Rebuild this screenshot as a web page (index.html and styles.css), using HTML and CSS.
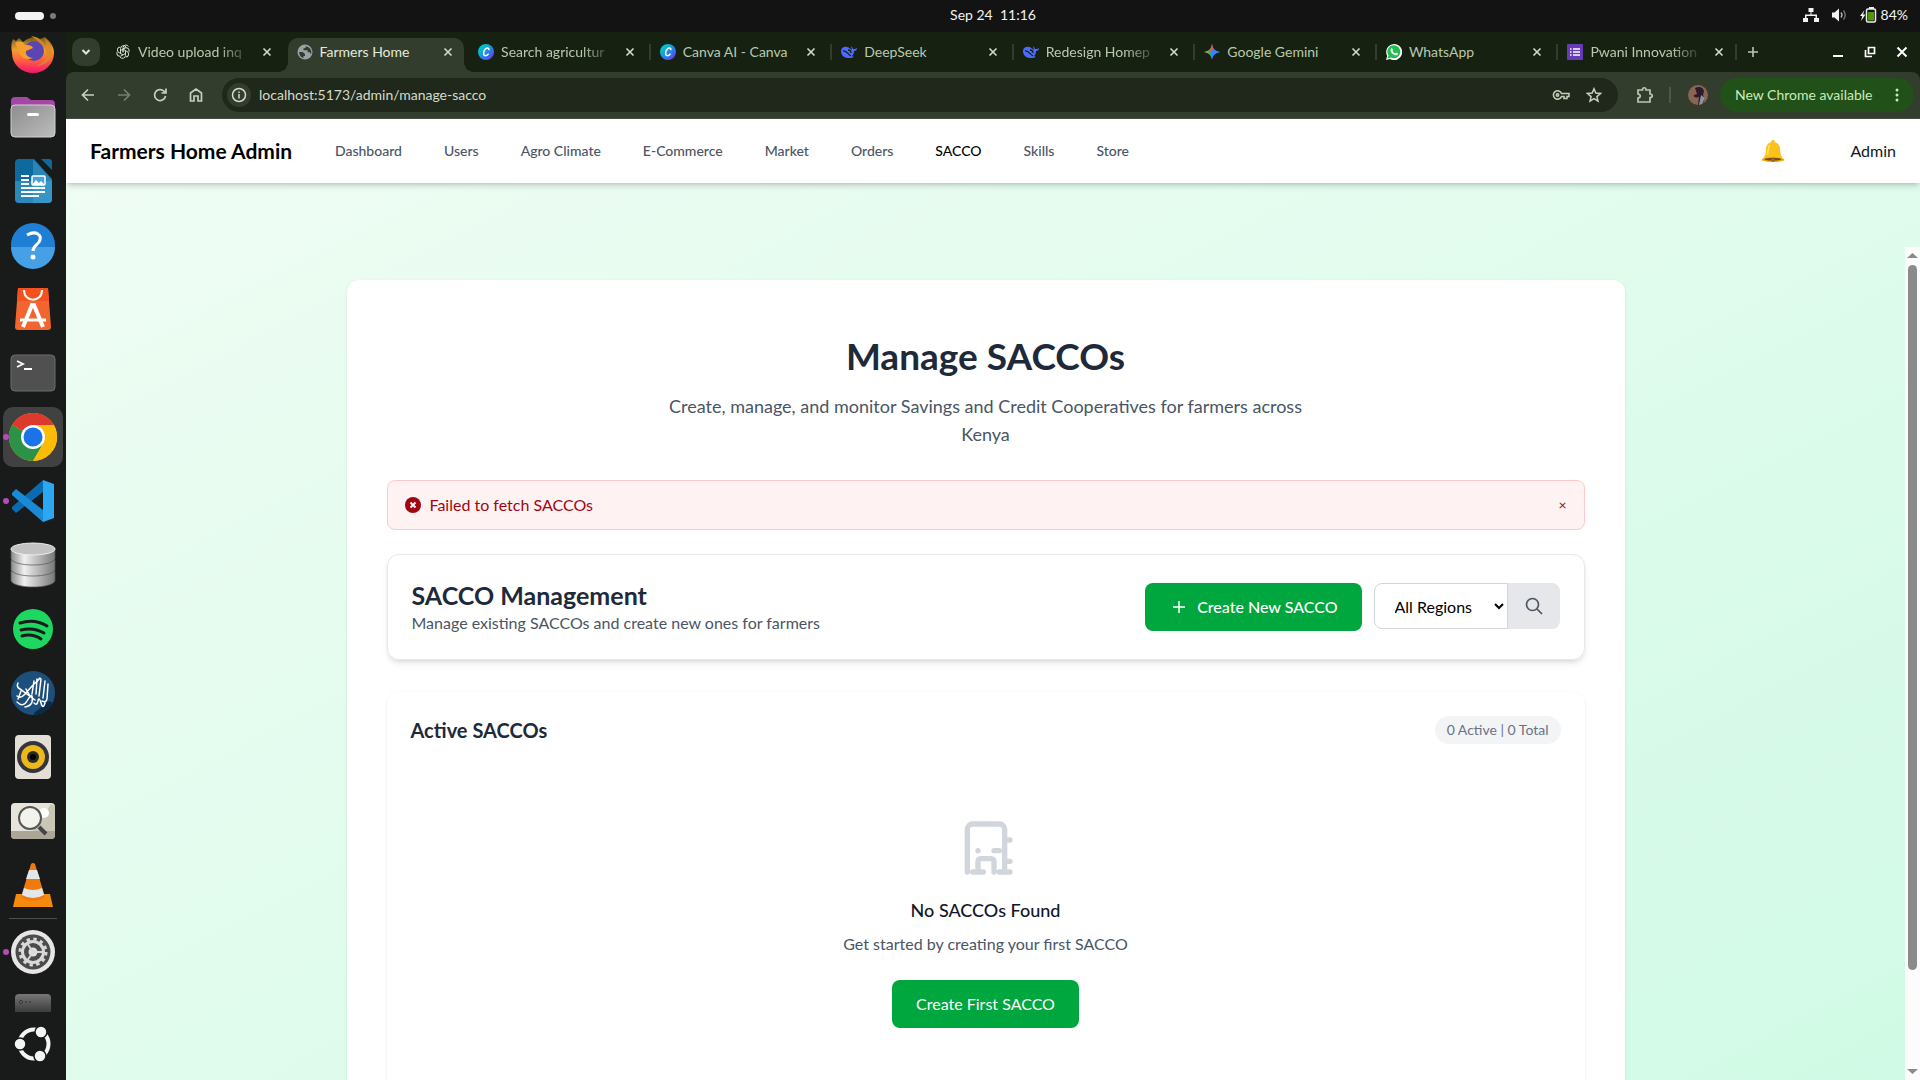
FILE: index.html
```html
<!DOCTYPE html>
<html lang="en">
<head>
<meta charset="utf-8">
<title>Farmers Home</title>
<link rel="stylesheet" href="styles.css">
</head>
<body>
<div class="desktop">
  <div class="topbar">
    <div class="workspaces"><span class="ws-pill"></span><span class="ws-dot"></span></div>
    <div class="topbar-main">
      <time class="clock">Sep 24&nbsp; 11:16</time>
      <div class="tray">
        <svg width="16" height="16" viewBox="0 0 16 16" fill="#f2f2f2"><path d="M5.500 1h5v4h-2v2.500h5.500v3.500h2v4h-5v-4h1.500v-2h-9v2H5v4H0v-4h2V7.500h5.500V5h-2z"/></svg>
        <svg width="16" height="16" viewBox="0 0 16 16"><path d="M1 5.500h2.500L8 1.500v13L3.500 10.500H1z" fill="#f2f2f2"/><path d="M10 5.500q2 2.500 0 5" fill="none" stroke="#bbb" stroke-width="1.300"/><path d="M12.500 3.500q3.500 4.500 0 9" fill="none" stroke="#777" stroke-width="1.300"/></svg>
        <svg width="18" height="16" viewBox="0 0 18 16"><path d="M5.500 3L1 9h2.300L2 14l4.500-6.500H4z" fill="#f2f2f2"/><path d="M10 1h5" stroke="#eee" stroke-width="2"/><rect x="7.500" y="2" width="9" height="13" rx="1.500" fill="#131313" stroke="#eee" stroke-width="1.500"/><rect x="9" y="5" width="6" height="8.500" fill="#4e9a06"/></svg>
        <span>84%</span>
      </div>
    </div>
  </div>
  <div class="workspace">
    <nav class="dock" aria-label="Dock">
      <span class="app app-cut"><svg width="48" height="42" viewBox="0 6 48 42"><defs><linearGradient id="ff" x1="0" y1="0" x2="0" y2="1"><stop offset="0" stop-color="#6b5a18"/><stop offset=".35" stop-color="#f0a030"/><stop offset=".6" stop-color="#ff6a3a"/><stop offset="1" stop-color="#f5136f"/></linearGradient></defs><path d="M5 11l3 2 3-3 4 4c5-4 9-5 13-5l4 2 5-2c6 5 9 10 9 16a21 20 0 0 1-42 0C3 19 3 15 5 11z" transform="translate(-1 0)" fill="url(#ff)"/><circle cx="25" cy="23" r="10" fill="#5b45b0"/><path d="M6 15c5-3 9-1 10 2 3 0 7 0 8 3l-7 3c-1 4 3 7 7 7-7 3-13-1-14-7z" fill="#f5a02e"/><path d="M22 8c8 1 14 6 15 13 1-4 0-8-2-11 6 4 9 10 8 16-2 8-9 12-16 12 8-3 12-9 10-15-1-6-9-10-15-15z" fill="#dc8a28" opacity=".8"/></svg></span>
      <span class="app"><svg width="48" height="48" viewBox="0 0 48 48"><defs><linearGradient id="fl" x1="0" y1="0" x2="1" y2="1"><stop offset="0" stop-color="#8c8c8c"/><stop offset="1" stop-color="#bdbdbd"/></linearGradient></defs><path d="M2 8a4 4 0 0 1 4-4h12l4 3h20a4 4 0 0 1 4 4v9H2z" fill="#a349a4"/><rect x="2" y="12" width="44" height="32" rx="4" fill="url(#fl)" stroke="#d0d0d0"/><rect x="18" y="20" width="12" height="3" rx="1.500" fill="#fff"/></svg></span>
      <span class="app"><svg width="48" height="48" viewBox="0 0 48 48"><path d="M10 2h15l18 20v20a4 4 0 0 1-4 4H10a4 4 0 0 1-4-4V6a4 4 0 0 1 4-4z" fill="#0e6a9e"/><path d="M24 2l19 21v19a4 4 0 0 1-4 4H24z" fill="#2a84b8"/><path d="M6 24h37v18a4 4 0 0 1-4 4H10a4 4 0 0 1-4-4z" fill="#45a5d8" opacity=".5"/><path d="M32 2h8a3 3 0 0 1 3 3v8z" fill="#0e6a9e"/><path d="M12 19h8M12 23h8M12 27h8M12 31h24M12 35h24M12 39h18" stroke="#fff" stroke-width="2"/><rect x="23" y="19" width="13" height="9" rx="1" fill="#45a5d8" stroke="#fff" stroke-width="1.500"/><path d="M23 28l4-5 3 3 2-2 4 4z" fill="#fff"/></svg></span>
      <span class="app"><svg width="48" height="48" viewBox="0 0 48 48"><circle cx="24" cy="24" r="22" fill="#1f7fd4"/><path d="M2 26h44a22 22 0 0 1-44 0z" fill="#45a0e6"/><path d="M18 14c9-5 16 0 12 7-2 3-6 4-6 9" fill="none" stroke="#fff" stroke-width="3"/><circle cx="24" cy="36" r="2.500" fill="#fff"/></svg></span>
      <span class="app"><svg width="48" height="48" viewBox="0 0 48 48"><path d="M9 3h30l3 39a3 3 0 0 1-3 3H9a3 3 0 0 1-3-3z" fill="#f26430"/><path d="M9 3h30l1 13H8z" fill="#f4511e"/><path d="M15 5c0 13 18 13 18 0" fill="none" stroke="#fff" stroke-width="2"/><path d="M14 42l9-22h2l9 22" fill="none" stroke="#fff" stroke-width="4"/><path d="M11 35h26" stroke="#fff" stroke-width="3"/></svg></span>
      <span class="app"><svg width="48" height="48" viewBox="0 0 48 48"><rect x="2" y="6" width="44" height="36" rx="4" fill="#505050" stroke="#6d6d6d"/><path d="M8 12l6 3-6 3M15 20h8" fill="none" stroke="#fff" stroke-width="1.800"/></svg></span>
      <span class="app app-active"><span class="run-dot"></span><svg width="48" height="48" viewBox="0 0 48 48"><circle cx="24" cy="24" r="24" fill="#fbbc05"/><path d="M24 24L3.200 12A24 24 0 0 1 44.800 12H24z" fill="#db3a2c"/><path d="M3.200 12A24 24 0 0 0 24 48L34.400 30 24 24z" fill="#2c9247"/><path d="M24 48L34.500 30 36 16l9-4A24 24 0 0 1 24 48z" fill="#fbbc05"/><circle cx="24" cy="24" r="12" fill="#fff"/><circle cx="24" cy="24" r="9.500" fill="#1a73e8"/></svg></span>
      <span class="app"><span class="run-dot"></span><svg width="48" height="48" viewBox="0 0 48 48"><path d="M34 3v12L7 36l-4-4v-2z" fill="#0a6bb0"/><path d="M7 12l27 21v12L3 18v-2z" fill="#1a8ad4"/><path d="M34 3l11 4v34l-11 4z" fill="#2aa8f2"/></svg></span>
      <span class="app"><svg width="48" height="48" viewBox="0 0 48 48"><defs><linearGradient id="db"><stop offset="0" stop-color="#8a8a8a"/><stop offset=".3" stop-color="#f0f0f0"/><stop offset="1" stop-color="#777"/></linearGradient></defs><g fill="url(#db)" stroke="#555" stroke-width=".7"><path d="M2 30v10c4 8 40 8 44 0V30z"/><path d="M2 19v10c4 8 40 8 44 0V19z"/><path d="M2 8v10c4 8 40 8 44 0V8z"/></g><ellipse cx="24" cy="8" rx="22" ry="6" fill="#c2c2c2" stroke="#eee"/></svg></span>
      <span class="app"><svg width="48" height="48" viewBox="0 0 48 48"><circle cx="24" cy="24" r="20" fill="#1ed760"/><path d="M11 18c9-3 19-2 27 3M12 25c8-2 16-1 23 3M13 31c7-2 13-1 19 3" fill="none" stroke="#191a1a" stroke-width="3" stroke-linecap="round"/></svg></span>
      <span class="app"><svg width="48" height="48" viewBox="0 0 48 48"><circle cx="24" cy="24" r="22" fill="#1d4f7c"/><path d="M25 44l15-12 4 2a22 22 0 0 1-19 12z" fill="#0c2a48"/><path d="M9 14q-2 4 2 6l15 11M8 27q4 3 8-2l8-9q4-3 7-7M8 33q6 6 10-1t5-5 0 6-7 5M25 12l-2 13M28 10l-1 15M32 10l-2 17M36 12l-2 17M39 15l-1 15q-1 4-5 2M25 34q3 3 4-2t3 2 4 0M12 22l-3 8M17 20l4 7" fill="none" stroke="#fff" stroke-width="1.500" stroke-linecap="round"/></svg></span>
      <span class="app"><svg width="48" height="48" viewBox="0 0 48 48"><rect x="6" y="2" width="36" height="44" rx="4" fill="#e4dfd6"/><circle cx="24" cy="24" r="16" fill="#34343c"/><circle cx="24" cy="24" r="12" fill="#edb91a"/><circle cx="24" cy="24" r="6" fill="#2a2a2a"/><circle cx="24" cy="24" r="3" fill="#000"/></svg></span>
      <span class="app"><svg width="48" height="48" viewBox="0 0 48 48"><rect x="2" y="6" width="44" height="36" rx="4" fill="#e6e4da"/><path d="M2 34h44v4a4 4 0 0 1-4 4H6a4 4 0 0 1-4-4z" fill="#aca698"/><path d="M24 34L42 7l4 2v25z" fill="#c9c6b6"/><circle cx="35" cy="16" r="5" fill="#fff"/><circle cx="21" cy="21" r="11" fill="#f6f6f2" fill-opacity=".8" stroke="#555" stroke-width="2"/><path d="M30 30l7 7" stroke="#444" stroke-width="4"/></svg></span>
      <span class="app"><svg width="48" height="48" viewBox="0 0 48 48"><path d="M7 33h34l3 13H4z" fill="#f58a0c"/><path d="M22 3q2-2 4 0l10 33q-12 8-24 0z" fill="#f07a10"/><path d="M20 9h8l3 9H17zM15 27q9 4 18 0l2 7q-11 6-22 0z" fill="#e3e7ea"/></svg></span>
      <span class="dock-line"></span>
      <span class="app"><span class="run-dot"></span><svg width="48" height="48" viewBox="0 0 48 48"><circle cx="24" cy="24" r="22" fill="#e6e6e6"/><circle cx="24" cy="24" r="17.500" fill="#4b4b4b"/><circle cx="24" cy="24" r="13" fill="none" stroke="#d8d8d8" stroke-width="3" stroke-dasharray="3.400 3.400"/><circle cx="24" cy="24" r="10.500" fill="none" stroke="#d8d8d8" stroke-width="3"/><circle cx="24" cy="24" r="4.500" fill="#e0e0e0"/><path d="M24 24h10M24 24l-6 9M24 24l-6-9" stroke="#d8d8d8" stroke-width="2"/></svg></span>
      <span class="app-half"><svg width="36" height="18" viewBox="0 0 36 18"><defs><linearGradient id="dk" x1="0" y1="0" x2="0" y2="1"><stop offset="0" stop-color="#777"/><stop offset="1" stop-color="#3c3c3c"/></linearGradient></defs><path d="M0 18V4a4 4 0 0 1 4-4h28a4 4 0 0 1 4 4v14z" fill="url(#dk)"/><circle cx="6" cy="8" r="1.500" fill="#6a7a2a" stroke="#333"/><circle cx="11" cy="8" r="1" fill="#3c3c3c"/><circle cx="15" cy="8" r="1" fill="#3c3c3c"/></svg></span>
      <span class="app"><svg width="48" height="48" viewBox="0 0 48 48"><circle cx="25" cy="24" r="14.500" fill="none" stroke="#f4f4f4" stroke-width="4"/><g fill="#f4f4f4" stroke="#191a1a" stroke-width="1.500"><circle cx="11" cy="24" r="6"/><circle cx="32" cy="12" r="6"/><circle cx="31" cy="36" r="6"/></g></svg></span>
    </nav>

    <div class="browser">
      <div class="tabstrip">
        <button class="tab-search" aria-label="Search tabs"><svg width="12" height="12" viewBox="0 0 12 12"><path d="M2.500 4L6 7.500 9.500 4" fill="none" stroke="#e0e6da" stroke-width="2"/></svg></button>
        <div class="tabs">
          <div class="tab"><svg class="fav" viewBox="0 0 16 16"><g fill="none" stroke="#d5ddd0" stroke-width="1"><path id="petal" d="M8 8V3.500a3 3 0 0 1 5.500-1"/><path d="M5.500 9.500V4.500a3 3 0 0 1 5.500-1.500l-3 2v3.500"/><path d="M5.500 9.500V4.500a3 3 0 0 1 5.500-1.500" transform="rotate(60 8 8)"/><path d="M5.500 9.500V4.500a3 3 0 0 1 5.500-1.500" transform="rotate(120 8 8)"/><path d="M5.500 9.500V4.500a3 3 0 0 1 5.500-1.500" transform="rotate(180 8 8)"/><path d="M5.500 9.500V4.500a3 3 0 0 1 5.500-1.500" transform="rotate(240 8 8)"/><path d="M5.500 9.500V4.500a3 3 0 0 1 5.500-1.500" transform="rotate(300 8 8)"/></g></svg><span class="tab-title fade">Video upload inq</span><button class="tab-x" aria-label="Close tab"><svg width="10" height="10"><path d="M1.500 1.500l7 7m0-7l-7 7"/></svg></button></div>
          <div class="tab tab-on"><svg class="fav" viewBox="0 0 16 16"><circle cx="8" cy="8" r="7.500" fill="#9aa0a6"/><path d="M2.200 8h3.500l2.300 2v2H6.500v2A6.200 6.200 0 0 1 2.200 8zM9 2.200c0 1.500-1 2-2.500 2v2h4.200v2h2l1.300 2a6.200 6.200 0 0 0-5-8z" fill="#333d2d"/></svg><span class="tab-title">Farmers Home</span><button class="tab-x" aria-label="Close tab"><svg width="10" height="10"><path d="M1.500 1.500l7 7m0-7l-7 7"/></svg></button></div>
          <div class="tab"><svg class="fav" viewBox="0 0 16 16"><defs><linearGradient id="cv" x1="0" y1="0" x2="1" y2="1"><stop offset=".2" stop-color="#00c4cc"/><stop offset=".6" stop-color="#2a7de8"/><stop offset="1" stop-color="#7d2ae8"/></linearGradient></defs><circle cx="8" cy="8" r="8" fill="url(#cv)"/><path d="M10.800 6.200c.5-2-1.300-2.700-3-1.500-2.600 1.900-3 6.800-.5 7 1.500.1 2.500-.7 3.300-2" fill="none" stroke="#fff" stroke-width="1.500"/></svg><span class="tab-title fade">Search agricultur</span><button class="tab-x" aria-label="Close tab"><svg width="10" height="10"><path d="M1.500 1.500l7 7m0-7l-7 7"/></svg></button></div>
          <div class="tab tab-sep"><svg class="fav" viewBox="0 0 16 16"><circle cx="8" cy="8" r="8" fill="url(#cv)"/><path d="M10.800 6.200c.5-2-1.300-2.700-3-1.500-2.600 1.900-3 6.800-.5 7 1.500.1 2.500-.7 3.300-2" fill="none" stroke="#fff" stroke-width="1.500"/></svg><span class="tab-title">Canva AI - Canva</span><button class="tab-x" aria-label="Close tab"><svg width="10" height="10"><path d="M1.500 1.500l7 7m0-7l-7 7"/></svg></button></div>
          <div class="tab tab-sep"><svg class="fav" viewBox="0 0 16 16"><path d="M0 7c0-3 3-5 6-4 2 0 3 2 5 3l-1-4c1 1 2 2 2 3 1 0 3 0 4-1 0 2-1 3-3 3 0 3-1 4-2 5l2 1c-2 1-4 1-6 1-4 0-7-3-7-7z" fill="#4d6bfe"/><path d="M2 7c3-1 5 3 8 5M7 6c2 0 3 1 3 3" fill="none" stroke="#162112" stroke-width="1.300"/></svg><span class="tab-title">DeepSeek</span><button class="tab-x" aria-label="Close tab"><svg width="10" height="10"><path d="M1.500 1.500l7 7m0-7l-7 7"/></svg></button></div>
          <div class="tab tab-sep"><svg class="fav" viewBox="0 0 16 16"><path d="M0 7c0-3 3-5 6-4 2 0 3 2 5 3l-1-4c1 1 2 2 2 3 1 0 3 0 4-1 0 2-1 3-3 3 0 3-1 4-2 5l2 1c-2 1-4 1-6 1-4 0-7-3-7-7z" fill="#4d6bfe"/><path d="M2 7c3-1 5 3 8 5M7 6c2 0 3 1 3 3" fill="none" stroke="#162112" stroke-width="1.300"/></svg><span class="tab-title fade">Redesign Homep</span><button class="tab-x" aria-label="Close tab"><svg width="10" height="10"><path d="M1.500 1.500l7 7m0-7l-7 7"/></svg></button></div>
          <div class="tab tab-sep"><svg class="fav" viewBox="0 0 16 16"><defs><linearGradient id="gm" x1="0" y1="0" x2="1" y2="0"><stop offset="0" stop-color="#f9bc15"/><stop offset=".35" stop-color="#45a86b"/><stop offset=".55" stop-color="#3186ff"/></linearGradient></defs><path d="M8 0c1 5 3 7 8 8-5 1-7 3-8 8-1-5-3-7-8-8 5-1 7-3 8-8z" fill="url(#gm)"/><path d="M8 0c1 5 2 6 4 7H5c2-2 2-4 3-7z" fill="#ee5145"/><path d="M16 8c-5 1-7 3-8 5V6h3c1 1 3 2 5 2z" fill="#3186ff"/></svg><span class="tab-title">Google Gemini</span><button class="tab-x" aria-label="Close tab"><svg width="10" height="10"><path d="M1.500 1.500l7 7m0-7l-7 7"/></svg></button></div>
          <div class="tab tab-sep"><svg class="fav" viewBox="0 0 16 16"><path d="M0 16l1.200-4A8 8 0 1 1 4 14.900z" fill="#fff"/><path d="M1.500 14.500l1-3A6.500 6.500 0 1 1 5 13.600z" fill="#1fc04f"/><path d="M5 4.500c1-.8 1.500 0 2 1.500L6.500 7c.5 1 1.500 2 2.500 2.300l1-.8 2 1c0 1.500-1.500 2-2.500 1.800C7 10.800 4.500 8.500 4.500 6z" fill="#fff"/></svg><span class="tab-title">WhatsApp</span><button class="tab-x" aria-label="Close tab"><svg width="10" height="10"><path d="M1.500 1.500l7 7m0-7l-7 7"/></svg></button></div>
          <div class="tab tab-sep"><svg class="fav" viewBox="0 0 16 16"><rect width="16" height="16" rx="1" fill="#673ab7"/><path d="M3 5h1.500M3 8h1.500M3 11h1.500M6 5h7M6 8h7M6 11h7" stroke="#fff" stroke-width="1.700"/></svg><span class="tab-title fade">Pwani Innovation</span><button class="tab-x" aria-label="Close tab"><svg width="10" height="10"><path d="M1.500 1.500l7 7m0-7l-7 7"/></svg></button></div>
        </div>
        <div class="strip-end">
          <button class="new-tab" aria-label="New tab"><svg width="12" height="12" viewBox="0 0 12 12"><path d="M6 1v10M1 6h10" stroke="#b9c9ae" stroke-width="1.600"/></svg></button>
          <div class="win-buttons">
            <button aria-label="Minimise"><svg width="12" height="12"><path d="M1 10h10" stroke="#fff" stroke-width="2"/></svg></button>
            <button aria-label="Restore"><svg width="12" height="12" fill="none" stroke="#fff" stroke-width="1.700"><path d="M4.500 1.500h6v6h-6z"/><path d="M1.500 4v6.500H8"/></svg></button>
            <button aria-label="Close"><svg width="12" height="12"><path d="M1.500 1.500l9 9m0-9l-9 9" stroke="#fff" stroke-width="2"/></svg></button>
          </div>
        </div>
      </div>
      <div class="toolbar">
        <div class="nav-buttons">
          <button aria-label="Back"><svg class="ico" viewBox="0 0 16 16"><path d="M14 8H3M8 2.500L2.500 8 8 13.500"/></svg></button>
          <button class="dim" aria-label="Forward"><svg class="ico" viewBox="0 0 16 16"><path d="M2 8h11M8 2.500L13.500 8 8 13.500"/></svg></button>
          <button aria-label="Reload"><svg class="ico" viewBox="0 0 16 16"><path d="M13.500 9A5.500 5.500 0 1 1 12 4.200L13.500 6M14 1.500V6H9.500"/></svg></button>
          <button aria-label="Home"><svg class="ico" viewBox="0 0 16 16"><path d="M2.500 14V6L8 2l5.500 4v8H10V9H6v5z"/></svg></button>
        </div>
        <div class="omnibox">
          <span class="site-info"><svg width="16" height="16" viewBox="0 0 16 16" fill="none" stroke="#d3dccb" stroke-width="1.500"><circle cx="8" cy="8" r="6.500"/><path d="M8 7v4.500M8 4.500V6"/></svg></span>
          <input class="url" type="text" aria-label="Address" value="localhost:5173/admin/manage-sacco">
          <svg width="18" height="16" viewBox="0 0 18 16" fill="none" stroke="#c5d0bc" stroke-width="1.500"><path d="M9.500 6.500A4.200 4.200 0 1 0 9.500 9.500H12v2h3v-2h2v-3z"/><circle cx="5.500" cy="8" r="1.200"/></svg>
          <svg width="16" height="16" viewBox="0 0 16 16" fill="none" stroke="#c5d0bc" stroke-width="1.500"><path d="M8 1.800l1.800 4.300 4.700.4-3.600 3.100 1.100 4.600L8 11.700l-4 2.500 1.100-4.600L1.500 6.500l4.700-.4z"/></svg>
        </div>
        <div class="tool-end">
          <svg width="18" height="18" viewBox="0 0 18 18" fill="none" stroke="#b9c9ae" stroke-width="1.700"><path d="M2 4h4.500c0-3 3.500-3 3.500 0h4v4c3 0 3 3.500 0 3.500V16H2v-4c3-.5 3-3.500 0-4z"/></svg>
          <span class="tool-line"></span>
          <svg class="avatar" width="20" height="20" viewBox="0 0 20 20"><circle cx="10" cy="10" r="10" fill="#8a6552"/><path d="M7 3c4-2 8-1 9 3l-1 4c2 3 2 6-1 9l-4 1 1-8c-3 1-6 0-5-2l3-1z" fill="#2a1c2c"/><path d="M13 10l4 3-3 6-3 1z" fill="#8d929e"/></svg>
          <button class="update">New Chrome available<svg width="4" height="16" viewBox="0 0 4 16" fill="#c9edb8"><circle cx="2" cy="3" r="1.500"/><circle cx="2" cy="8" r="1.500"/><circle cx="2" cy="13" r="1.500"/></svg></button>
        </div>
      </div>

      <div class="page">
        <header class="site-header">
          <span class="brand">Farmers Home Admin</span>
          <nav class="site-nav">
            <a href="#">Dashboard</a><a href="#">Users</a><a href="#">Agro Climate</a><a href="#">E-Commerce</a><a href="#">Market</a><a href="#">Orders</a><a href="#" class="on">SACCO</a><a href="#">Skills</a><a href="#">Store</a>
          </nav>
          <button class="bell" aria-label="Notifications"><svg width="24" height="24" viewBox="0 0 24 24"><path d="M12 1c1.500 0 2 1 2 2.200 4 1 5 4 5.200 8.300.2 4 1 6 3.300 8.500h-21C3.800 17.500 4.600 15.500 4.800 11.500 5 7.200 6 4.200 10 3.200 10 2 10.500 1 12 1z" fill="#fcc21b"/><path d="M9 6C7 8 7 12 6.500 16" stroke="#ffe36c" stroke-width="1.500" fill="none"/><path d="M1 20q11-4 22 0v1.500q-11 3-22 0z" fill="#f2a600"/><ellipse cx="12" cy="20.300" rx="8.500" ry="1.500" fill="#6d4c1f"/><circle cx="12" cy="21" r="2" fill="#a06a12"/></svg></button>
          <span class="user">Admin</span>
        </header>
        <div class="scroller">
          <main class="card">
            <div class="intro">
              <h1>Manage SACCOs</h1>
              <p>Create, manage, and monitor Savings and Credit Cooperatives for farmers across Kenya</p>
            </div>
            <div class="alert" role="alert">
              <svg width="16" height="16" viewBox="0 0 16 16"><circle cx="8" cy="8" r="8" fill="#9f0712"/><path d="M5.500 5.500l5 5m0-5l-5 5" stroke="#fef2f2" stroke-width="2"/></svg>
              <span>Failed to fetch SACCOs</span>
              <button aria-label="Dismiss">×</button>
            </div>
            <section class="manage">
              <div class="manage-text">
                <h2>SACCO Management</h2>
                <p>Manage existing SACCOs and create new ones for farmers</p>
              </div>
              <div class="actions">
                <button class="btn btn-new"><svg width="12" height="12" viewBox="0 0 12 12"><path d="M6 0v12M0 6h12" stroke="#fff" stroke-width="1.500"/></svg>Create New SACCO</button>
                <div class="filter">
                  <select aria-label="Region"><option>All Regions</option></select>
                  <button class="search" aria-label="Search"><svg width="18" height="18" viewBox="0 0 18 18" fill="none" stroke="#4a5565" stroke-width="1.700"><circle cx="7.500" cy="7.500" r="6"/><path d="M12 12l5 5"/></svg></button>
                </div>
              </div>
            </section>
            <section class="active">
              <div class="active-head"><h3>Active SACCOs</h3><span class="pill">0 Active | 0 Total</span></div>
              <div class="empty">
                <svg width="64" height="64" viewBox="0 0 24 24" fill="none" stroke="#d1d5dc" stroke-width="2" stroke-linecap="round" stroke-linejoin="round"><path d="M5 21V5a2 2 0 0 1 2-2h10a2 2 0 0 1 2 2v16m0 0h2m-2 0h-2M19 9h2m-2 8h2M7 21h4M9 21v-4a1 1 0 0 1 1-1h4a1 1 0 0 1 1 1v4M9 13h.01M15 13h2"/></svg>
                <h4>No SACCOs Found</h4>
                <p>Get started by creating your first SACCO</p>
                <button class="btn">Create First SACCO</button>
              </div>
            </section>
          </main>
        </div>
        <div class="scrollbar">
          <svg width="15" height="18" viewBox="0 0 15 18"><path d="M2 11l5.500-5 5.500 5z" fill="#8b8b8b"/></svg>
          <span class="thumb"></span>
          <span class="track"></span>
          <svg width="15" height="18" viewBox="0 0 15 18"><path d="M2 7l5.500 5L13 7z" fill="#8b8b8b"/></svg>
        </div>
      </div>
    </div>
  </div>
</div>
</body>
</html>
```
FILE: styles.css
```css
* { box-sizing: border-box; }
body, h1, h2, h3, h4, p { margin: 0; }
body { font-family: Lato, "Open Sans", sans-serif; font-size: 16px; line-height: 24px; color: #101828; }
button, select, input { font: inherit; color: inherit; margin: 0; border: 0; background: none; padding: 0; }
svg { display: block; flex: none; }

.desktop { height: 100vh; display: flex; flex-direction: column; overflow: hidden; }
.topbar { display: flex; height: 32px; flex: none; background: #131313; color: #f2f2f2; font-size: 14px; }
.workspaces { width: 66px; display: flex; align-items: center; gap: 6px; padding-left: 15px; }
.ws-pill { width: 29px; height: 8px; border-radius: 4px; background: #f2f2f2; }
.ws-dot { width: 6px; height: 6px; border-radius: 3px; background: #7c7c7c; }
.topbar-main { flex: 1; display: grid; grid-template-columns: 1fr auto 1fr; align-items: center; padding-bottom: 2px; }
.clock { grid-column: 2; }
.tray { display: flex; align-items: center; justify-content: flex-end; gap: 12px; padding-right: 12px; }
.tray span { margin-left: -8px; }

.workspace { flex: 1; display: flex; min-height: 0; }
.dock { width: 66px; flex: none; background: #191a1a; display: flex; flex-direction: column; overflow: hidden; }
.app { height: 64px; flex: none; display: flex; align-items: center; justify-content: center; position: relative; }
.app-cut { height: 53px; align-items: flex-start; padding-top: 2px; }
.app-active::before { content: ""; position: absolute; inset: 2px 3px; border-radius: 10px; background: #414141; }
.app svg { position: relative; width: 48px; }
.run-dot { position: absolute; z-index: 1; left: 3px; top: 29px; width: 6px; height: 6px; border-radius: 3px; background: #b44cb8; }
.dock-line { height: 1px; margin: 1px 9px; background: #4c4d4d; flex: none; }
.app-half { height: 28px; flex: none; display: flex; justify-content: center; align-items: flex-end; }

.browser { flex: 1; min-width: 0; display: flex; flex-direction: column; background: #162112; }
.tabstrip { display: flex; height: 40px; padding: 6px 0 0 6px; flex: none; }
.tab-search { width: 28px; height: 28px; border-radius: 10px; background: #333d2d; display: flex; align-items: center; justify-content: center; margin-right: 6px; }
.tabs { flex: 1; min-width: 0; display: grid; grid-template-columns: repeat(9, 1fr); }
.tab { position: relative; display: flex; align-items: center; min-width: 0; height: 34px; padding: 0 16px 6px 9px; font-size: 14px; color: #b9c9ae; }
.fav { width: 16px; height: 16px; margin-right: 7px; }
.tab-title { flex: 1; min-width: 0; white-space: nowrap; margin-right: 8px; line-height: 20px; }
.fade { mask-image: linear-gradient(to right, #000 70%, transparent 98%); }
.tab-x { display: flex; }
.tab-x path { stroke: #d3dccb; stroke-width: 1.600; fill: none; }
.tab-on { color: #e3ebdc; }
.tab-on > * { position: relative; }
.tab-on::before { content: ""; position: absolute; left: 0; right: 5px; top: 0; bottom: 0; background: #333d2d; border-radius: 10px 10px 0 0; }
.tab-on::after { content: ""; position: absolute; left: -10px; right: -5px; bottom: 0; height: 10px; background: radial-gradient(circle at 0 0, transparent 10px, #333d2d 10px) left / 10px 10px no-repeat, radial-gradient(circle at 100% 0, transparent 10px, #333d2d 10px) right / 10px 10px no-repeat; }
.tab-sep::before { content: ""; position: absolute; left: -2px; top: 6px; width: 2px; height: 16px; background: #333d2d; }
.tab:last-child::after { content: ""; position: absolute; right: 3px; top: 6px; width: 2px; height: 16px; background: #333d2d; }
.strip-end { width: 180px; height: 28px; display: flex; justify-content: space-between; align-items: center; padding: 0 12px 0 0; }
.new-tab { display: flex; padding: 2px 7px; }
.win-buttons { display: flex; gap: 20px; }
.win-buttons button { display: flex; }

.toolbar { display: flex; align-items: center; height: 47px; flex: none; background: #333d2d; border-bottom: 1px solid #474d42; border-radius: 8px 8px 0 0; padding: 0 6px 0 14px; }
.nav-buttons { display: flex; gap: 20px; width: 142px; }
.nav-buttons button { display: flex; }
.ico { width: 16px; height: 16px; fill: none; stroke: #c5d0bc; stroke-width: 1.700; }
.dim { opacity: .45; }
.omnibox { flex: 1; height: 34px; border-radius: 17px; background: #1f281a; display: flex; align-items: center; gap: 16px; padding: 0 16px 0 5px; }
.site-info { width: 24px; height: 24px; border-radius: 12px; background: #333d2d; display: flex; align-items: center; justify-content: center; margin-right: -8px; }
.url { flex: 1; min-width: 0; font-size: 14px; color: #d3dccb; }
.tool-end { display: flex; align-items: center; margin-left: 18px; }
.tool-line { width: 2px; height: 16px; background: #4d5946; margin: 0 17px 0 15px; }
.update { display: flex; align-items: center; justify-content: space-between; width: 194px; height: 34px; margin-left: 12px; padding: 0 15px; border-radius: 17px; background: #215018; color: #c9edb8; font-size: 14px; white-space: nowrap; }

.page { flex: 1; min-height: 0; display: flex; flex-direction: column; position: relative; background: linear-gradient(to bottom right, #f0fdf4, #d0fae5); }
.site-header { height: 64px; flex: none; display: flex; align-items: center; padding: 0 24px; background: #fff; box-shadow: 0 4px 6px -1px rgba(0,0,0,.15), 0 2px 4px -2px rgba(0,0,0,.15); z-index: 1; }
.brand { font-size: 21px; font-weight: 700; color: #000; width: 245px; white-space: nowrap; }
.site-nav { display: flex; gap: 42px; flex: 1; font-size: 14px; font-weight: 500; }
.site-nav a { color: #4a5565; text-decoration: none; white-space: nowrap; }
.site-nav .on { color: #000; }
.bell { display: flex; margin-right: 65px; }
.scroller { flex: 1; min-height: 0; overflow: hidden; padding: 97px 15px 0 0; }
.card { max-width: 1278px; min-height: 1000px; margin: 0 auto; padding: 56px 40px 40px; background: #fff; border-radius: 12px; box-shadow: 0 1px 3px rgba(0,0,0,.1); }
.intro { max-width: 672px; margin: 0 auto 32px; text-align: center; }
h1 { font-size: 37px; line-height: 40px; color: #1e2939; }
.intro p { margin-top: 16px; font-size: 18px; line-height: 28px; color: #4a5565; }
.alert { display: flex; align-items: center; gap: 9px; padding: 12px 17px; border: 1px solid #ffc9c9; border-radius: 8px; background: #fef2f2; color: #9f0712; }
.alert span { flex: 1; }
.alert button { font-size: 14px; }
.manage { display: flex; align-items: center; justify-content: space-between; margin-top: 24px; padding: 24px; border: 1px solid #e5e7eb; border-radius: 12px; box-shadow: 0 4px 6px -1px rgba(0,0,0,.1), 0 2px 4px -2px rgba(0,0,0,.1); }
h2 { font-size: 25px; line-height: 32px; color: #1e2939; }
.manage p, .empty p { color: #4a5565; }
.actions { display: flex; gap: 12px; }
.btn { height: 48px; padding: 0 24px; border-radius: 8px; background: #00a63e; color: #fff; white-space: nowrap; }
.btn-new { display: flex; align-items: center; gap: 12px; padding: 0 24px 0 28px; font-weight: 500; }
.filter { display: flex; height: 46px; }
select { width: 134px; padding: 0 0 0 16px; border: 1px solid #d1d5dc; border-radius: 8px 0 0 8px; background: #fff; color: #000; }
.search { width: 52px; display: flex; align-items: center; justify-content: center; background: #e5e7eb; border-radius: 0 8px 8px 0; }
.active { margin-top: 32px; padding: 24px; border-radius: 12px; min-height: 440px; box-shadow: 0 1px 3px rgba(0,0,0,.1); }
.active-head { display: flex; align-items: center; justify-content: space-between; }
h3 { font-size: 20px; line-height: 28px; color: #1e2939; }
.pill { padding: 4px 12px; border-radius: 14px; background: #f3f4f6; color: #6a7282; font-size: 14px; line-height: 20px; }
.empty { display: flex; flex-direction: column; align-items: center; padding-top: 72px; }
h4 { margin: 16px 0 8px; font-size: 18px; line-height: 28px; font-weight: 500; }
.empty .btn { margin-top: 24px; }
.scrollbar { position: absolute; right: 0; top: 128px; bottom: 0; width: 15px; background: #fcfcfc; display: flex; flex-direction: column; align-items: center; }
.thumb { flex: 885; width: 9px; border-radius: 5px; background: #8b8b8b; }
.track { flex: 115; }
```
